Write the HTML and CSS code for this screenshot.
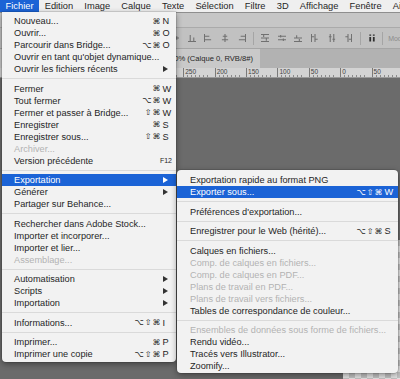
FILE: index.html
```html
<!DOCTYPE html>
<html lang="fr">

<head>
  <meta charset="UTF-8">
  <title>Fichier - Exportation</title>
  <link rel="stylesheet" href="styles.css">
</head>

<body>
  <div class="screen">
    <nav class="menubar">
      <span class="mb-item active">Fichier</span>
      <span class="mb-item">Edition</span>
      <span class="mb-item">Image</span>
      <span class="mb-item">Calque</span>
      <span class="mb-item">Texte</span>
      <span class="mb-item">Sélection</span>
      <span class="mb-item">Filtre</span>
      <span class="mb-item">3D</span>
      <span class="mb-item">Affichage</span>
      <span class="mb-item">Fenêtre</span>
      <span class="mb-item">Aide</span>
    </nav>

    <div class="ps">
      <div class="optbar"></div>
      <div class="toolbar">
        <span class="tool"><svg viewBox="0 0 9 9"><path d="M0 4.5h9M2.5 1.5v6M6.5 2.5v4"/></svg></span>
        <span class="tool"><svg viewBox="0 0 9 9"><path d="M0 8.5h9M2.5 1v7M6.5 4v4"/></svg></span>
        <span class="tool"><svg viewBox="0 0 9 9"><path d="M0.5 0v9M1 2.5h5M1 6.5h7"/></svg></span>
        <span class="tool"><svg viewBox="0 0 9 9"><path d="M4.5 0v9M2 2.5h5M1 6.5h7"/></svg></span>
        <span class="tool"><svg viewBox="0 0 9 9"><path d="M8.5 0v9M3 2.5h5M1 6.5h7"/></svg></span>
        <span class="tsep"></span>
        <span class="tool"><svg viewBox="0 0 9 9"><path d="M0 0.5h9M0 4.5h9M0 8.5h9M3 1v2.5M6 5v2.5"/></svg></span>
        <span class="tool"><svg viewBox="0 0 9 9"><path d="M0 2.5h9M0 6.5h9M3 1v3M6 5v3"/></svg></span>
        <span class="tool"><svg viewBox="0 0 9 9"><path d="M0 4.5h9M0 8.5h9M3 1.5v2.5M6 5.5v2.5"/></svg></span>
        <span class="tool"><svg viewBox="0 0 9 9"><path d="M0.5 0v9M4.5 0v9M1 3h2.5M5 6h2.5"/></svg></span>
        <span class="tool"><svg viewBox="0 0 9 9"><path d="M2.5 0v9M6.5 0v9M1 3h3M5 6h3"/></svg></span>
        <span class="tool"><svg viewBox="0 0 9 9"><path d="M4.5 0v9M8.5 0v9M1.5 3h2.5M5.5 6h2.5"/></svg></span>
        <span class="tsep"></span>
        <span class="tool"><svg viewBox="0 0 9 9" class="dark"><path d="M2.5 0.5v1.5M6.5 0.5v1.5M2.5 3.5v5M6.5 3.5v5"/></svg></span>
        <span class="tsep last"></span>
        <span class="mode">Mode</span>
      </div>
      <div class="tabs">
        <div class="tab">100% (Calque 0, RVB/8#)</div>
      </div>
      <div class="ruler">
        <span class="rc"></span><span class="rc"></span><span class="rc"></span>
        <span class="rc"></span><span class="rc"></span><span class="rc">250</span>
        <span class="rc">200</span><span class="rc">150</span><span class="rc">100</span>
        <span class="rc">50</span><span class="rc">0</span><span class="rc">50</span>
        <span class="rc">100</span>
      </div>
      <div class="canvas">
        <div class="doc"></div>
      </div>
    </div>

    <div class="menu main">
      <div class="item"><span class="label">Nouveau...</span><span class="key"><span class="mods">⌘</span><span class="k">N</span></span></div>
      <div class="item"><span class="label">Ouvrir...</span><span class="key"><span class="mods">⌘</span><span class="k">O</span></span></div>
      <div class="item"><span class="label">Parcourir dans Bridge...</span><span class="key"><span class="mods">⌥⌘</span><span class="k">O</span></span></div>
      <div class="item"><span class="label">Ouvrir en tant qu'objet dynamique...</span></div>
      <div class="item"><span class="label">Ouvrir les fichiers récents</span><span class="arrow"></span></div>
      <div class="sep"></div>
      <div class="item"><span class="label">Fermer</span><span class="key"><span class="mods">⌘</span><span class="k">W</span></span></div>
      <div class="item"><span class="label">Tout fermer</span><span class="key"><span class="mods">⌥⌘</span><span class="k">W</span></span></div>
      <div class="item"><span class="label">Fermer et passer à Bridge...</span><span class="key"><span class="mods">⇧⌘</span><span class="k">W</span></span></div>
      <div class="item"><span class="label">Enregistrer</span><span class="key"><span class="mods">⌘</span><span class="k">S</span></span></div>
      <div class="item"><span class="label">Enregistrer sous...</span><span class="key"><span class="mods">⇧⌘</span><span class="k">S</span></span></div>
      <div class="item off"><span class="label">Archiver...</span></div>
      <div class="item"><span class="label">Version précédente</span><span class="key"><span class="k small">F12</span></span></div>
      <div class="sep"></div>
      <div class="item on"><span class="label">Exportation</span><span class="arrow"></span></div>
      <div class="item"><span class="label">Générer</span><span class="arrow"></span></div>
      <div class="item"><span class="label">Partager sur Behance...</span></div>
      <div class="sep"></div>
      <div class="item"><span class="label">Rechercher dans Adobe Stock...</span></div>
      <div class="item"><span class="label">Importer et incorporer...</span></div>
      <div class="item"><span class="label">Importer et lier...</span></div>
      <div class="item off"><span class="label">Assemblage...</span></div>
      <div class="sep"></div>
      <div class="item"><span class="label">Automatisation</span><span class="arrow"></span></div>
      <div class="item"><span class="label">Scripts</span><span class="arrow"></span></div>
      <div class="item"><span class="label">Importation</span><span class="arrow"></span></div>
      <div class="sep"></div>
      <div class="item"><span class="label">Informations...</span><span class="key"><span class="mods">⌥⇧⌘</span><span class="k">I</span></span></div>
      <div class="sep"></div>
      <div class="item"><span class="label">Imprimer...</span><span class="key"><span class="mods">⌘</span><span class="k">P</span></span></div>
      <div class="item"><span class="label">Imprimer une copie</span><span class="key"><span class="mods">⌥⇧⌘</span><span class="k">P</span></span></div>
    </div>

    <div class="menu sub">
      <div class="item"><span class="label">Exportation rapide au format PNG</span></div>
      <div class="item on"><span class="label">Exporter sous...</span><span class="key"><span class="mods">⌥⇧⌘</span><span class="k">W</span></span></div>
      <div class="sep"></div>
      <div class="item"><span class="label">Préférences d'exportation...</span></div>
      <div class="sep"></div>
      <div class="item"><span class="label">Enregistrer pour le Web (hérité)...</span><span class="key"><span class="mods">⌥⇧⌘</span><span class="k">S</span></span></div>
      <div class="sep"></div>
      <div class="item"><span class="label">Calques en fichiers...</span></div>
      <div class="item off"><span class="label">Comp. de calques en fichiers...</span></div>
      <div class="item off"><span class="label">Comp. de calques en PDF...</span></div>
      <div class="item off"><span class="label">Plans de travail en PDF...</span></div>
      <div class="item off"><span class="label">Plans de travail vers fichiers...</span></div>
      <div class="item"><span class="label">Tables de correspondance de couleur...</span></div>
      <div class="sep"></div>
      <div class="item off"><span class="label">Ensembles de données sous forme de fichiers...</span></div>
      <div class="item"><span class="label">Rendu vidéo...</span></div>
      <div class="item"><span class="label">Tracés vers Illustrator...</span></div>
      <div class="item"><span class="label">Zoomify...</span></div>
    </div>
  </div>
</body>

</html>
```

FILE: styles.css
```css
* {
  margin: 0;
  padding: 0;
  box-sizing: border-box;
}

body {
  font-family: "Liberation Sans", "DejaVu Sans", sans-serif;
  background: #6b6b6b;
  color: #1f1f1f;
}

.screen {
  position: relative;
  width: 400px;
  height: 379px;
  overflow: hidden;
  display: flex;
  flex-direction: column;
}

/* top menu bar */
.menubar {
  display: flex;
  height: 12px;
  flex-shrink: 0;
  background: #efefef;
  font-size: 9.3px;
  line-height: 12px;
  white-space: nowrap;
  overflow: hidden;
}

.mb-item {
  padding: 0 5.6px;
}

.mb-item.active {
  background: #1b63d6;
  color: #fff;
}

/* photoshop window behind the menus */
.ps {
  flex: 1;
  display: flex;
  flex-direction: column;
}

.optbar {
  height: 15px;
  background: #c6c6c6;
  border-top: 1px solid #8e8e8e;
}

.toolbar {
  height: 21px;
  display: flex;
  align-items: center;
  padding-left: 167px;
  background: #c1c1c1;
  border-top: 1px solid #aaa;
  white-space: nowrap;
  overflow: hidden;
}

.tool {
  flex-shrink: 0;
  width: 16.6px;
  display: flex;
  justify-content: center;
}

.tool svg {
  width: 8px;
  height: 8px;
  fill: none;
  stroke: #707070;
  stroke-width: 1.2;
}

.tool svg.dark {
  stroke: #2e2e2e;
  stroke-width: 2;
}

.tsep {
  flex-shrink: 0;
  width: 1px;
  height: 13px;
  background: #a5a5a5;
  margin: 0 3px;
}

.tsep.last {
  margin: 0 2px;
}

.mode {
  margin-left: 3px;
  font-size: 7px;
  color: #8c8c8c;
}

.tabs {
  height: 20px;
  display: flex;
  background: #b2b2b2;
  border-top: 1px solid #a5a5a5;
}

.tab {
  width: 260px;
  background: #c9c9c9;
  display: flex;
  align-items: center;
  justify-content: flex-end;
  padding-right: 7px;
  font-size: 7.6px;
  color: #262626;
  white-space: nowrap;
  overflow: hidden;
}

.ruler {
  height: 10px;
  display: flex;
  padding-left: 26.3px;
  background: #d3d3d3;
  border-bottom: 1px solid #9a9a9a;
  overflow: hidden;
}

.rc {
  flex-shrink: 0;
  width: 31.4px;
  border-left: 1px solid #7a7a7a;
  padding-left: 1px;
  font-size: 6.5px;
  line-height: 7px;
  color: #444;
  background-image: repeating-linear-gradient(90deg, transparent 0 3.4px, #8a8a8a 3.4px 3.925px);
  background-size: 100% 2px;
  background-position: 0 100%;
  background-repeat: no-repeat;
}

.canvas {
  flex: 1;
  display: flex;
  justify-content: flex-end;
  align-items: flex-end;
  background: #6b6b6b;
}

.doc {
  width: 57px;
  height: 139px;
  background-color: #e4e4e4;
  background-image:
    linear-gradient(45deg, #c3c3c3 25%, transparent 25%, transparent 75%, #c3c3c3 75%),
    linear-gradient(45deg, #c3c3c3 25%, transparent 25%, transparent 75%, #c3c3c3 75%);
  background-size: 12px 12px;
  background-position: 0 0, 6px 6px;
}

/* dropdown menus */
.menu {
  position: absolute;
  background: #f2f2f2;
  font-size: 9.2px;
  white-space: nowrap;
  box-shadow: 0 2px 6px rgba(0, 0, 0, 0.4), 0 0 0 0.5px rgba(0, 0, 0, 0.2);
}

.menu.main {
  left: 2px;
  top: 12px;
  width: 174px;
  padding: 3px 0 2px;
  border-radius: 0 0 4px 4px;
}

.menu.sub {
  left: 177px;
  top: 170px;
  width: 221px;
  padding: 4px 0 1px;
  border-radius: 4px;
}

.item {
  display: flex;
  align-items: center;
  height: 12px;
  padding: 0 4px 0 12px;
}

.sub .item {
  padding-left: 13px;
}

.item .label {
  flex: 1;
}

.item.off {
  color: #b3b3b3;
}

.item.on {
  background: #1b63d6;
  color: #fff;
}

.sep {
  height: 1px;
  margin: 3px 0 3.5px;
  background: #dadada;
}

.key {
  display: flex;
  align-items: center;
}

.mods {
  font-family: "DejaVu Sans", sans-serif;
  font-size: 8px;
  letter-spacing: 1px;
}

.k {
  width: 9.5px;
  margin-left: 1px;
}

.k.small {
  width: auto;
  font-size: 7px;
}

.arrow {
  width: 0;
  height: 0;
  margin-right: 4px;
  border-left: 5px solid #333;
  border-top: 3px solid transparent;
  border-bottom: 3px solid transparent;
}

.item.on .arrow {
  border-left-color: #fff;
}
```
